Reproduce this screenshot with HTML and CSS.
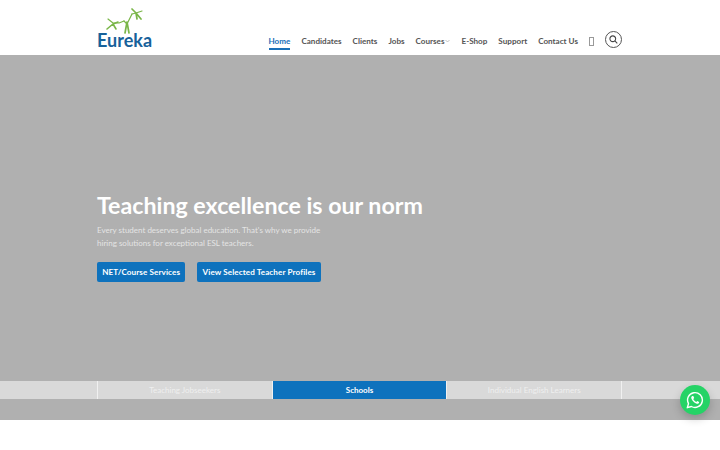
FILE: index.html
```html
<!DOCTYPE html>
<html lang="en">
<head>
    <meta charset="UTF-8">
    <meta name="viewport" content="width=device-width, initial-scale=1.0">
    <title>Eureka</title>
    <link rel="stylesheet" href="styles.css">
</head>
<body>
    <!-- Header -->
    <header class="header">
        <div class="container header-inner">
            <a class="logo" href="#">
                <svg class="logo-mark" width="38" height="26" viewBox="0 0 38 26" fill="none" stroke="#7ab648" stroke-linecap="round" stroke-linejoin="round">
                    <!-- left figure -->
                    <path d="M3 11 L8 15 L14 15 L19 13" stroke-width="1.2"/>
                    <path d="M2 21 L8 16 L13 14 M8 16 L11 21" stroke-width="1.6"/>
                    <!-- middle figure -->
                    <path d="M19 13 L22 16 L27 6" stroke-width="1.2"/>
                    <path d="M22 14 L20 25 M22 14 L24 25" stroke-width="1.7"/>
                    <!-- top figure -->
                    <path d="M27 6 L31 5 L37 3" stroke-width="1.2"/>
                    <path d="M27 1 L31 5 L36 11 M31 5 L32 11" stroke-width="1.7"/>
                </svg>
                <span class="logo-text">Eureka</span>
            </a>
            <nav class="nav">
                <a class="nav-link active" href="#">Home</a>
                <a class="nav-link" href="#">Candidates</a>
                <a class="nav-link" href="#">Clients</a>
                <a class="nav-link" href="#">Jobs</a>
                <a class="nav-link" href="#">Courses<svg class="caret" width="5" height="4" viewBox="0 0 5 4" fill="none" stroke="#aaa" stroke-width="0.7"><path d="M0.5 1 L2.5 3 L4.5 1"/></svg></a>
                <a class="nav-link" href="#">E-Shop</a>
                <a class="nav-link" href="#">Support</a>
                <a class="nav-link" href="#">Contact Us</a>
                <span class="tofu"></span>
                <button class="search-btn" aria-label="Search">
                    <svg width="9" height="9" viewBox="0 0 10 10" fill="none" stroke="#444" stroke-width="1.2"><circle cx="4.2" cy="4.2" r="3.2"/><path d="M6.6 6.6 L9.2 9.2"/></svg>
                </button>
            </nav>
        </div>
    </header>

    <!-- Hero -->
    <section class="hero">
        <div class="container hero-content">
            <h1>Teaching excellence is our norm</h1>
            <p>Every student deserves global education. That's why we provide<br>hiring solutions for exceptional ESL teachers.</p>
            <div class="hero-buttons">
                <a class="btn" href="#">NET/Course Services</a>
                <a class="btn" href="#">View Selected Teacher Profiles</a>
            </div>
        </div>
        <div class="tabs">
            <div class="container tabs-inner">
                <a class="tab" href="#">Teaching Jobseekers</a>
                <a class="tab selected" href="#">Schools</a>
                <a class="tab" href="#">Individual English Learners</a>
            </div>
        </div>
    </section>

    <a class="whatsapp" href="#" aria-label="WhatsApp">
        <svg width="18" height="18" viewBox="0 0 18 18" fill="none">
            <path d="M1.3 16.7 L2.5 12.6 A7.4 7.4 0 1 1 5.4 15.5 Z" stroke="#fff" stroke-width="1.4" stroke-linejoin="round"/>
            <path d="M6.3 4.9 C5.3 5.4 5 6.4 5.5 7.8 C6.2 9.8 8.2 11.8 10.2 12.5 C11.6 13 12.8 12.6 13.1 11.5 L13.1 10.9 L11.2 9.9 L10.3 10.9 C9.2 10.5 7.7 9 7.3 7.9 L8.2 7 L7.3 4.9 Z" fill="#fff"/>
        </svg>
    </a>
</body>
</html>
```

FILE: styles.css
```css
/* Global Styles */
html, body {
    height: 450px;
    overflow: hidden;
}

body {
    margin: 0;
    font-family: 'Lato', sans-serif;
    background-color: #fff;
    color: #444;
}

a {
    text-decoration: none;
}

.container {
    width: 525px;
    margin: 0 98px 0 97px;
}

/* Header */
.header {
    height: 55px;
    background-color: #fff;
}

.header-inner {
    display: flex;
    justify-content: space-between;
    height: 100%;
}

.logo {
    display: flex;
    flex-direction: column;
    align-items: flex-start;
    padding-top: 8px;
}

.logo-mark {
    margin-left: 8px;
    margin-bottom: -2px;
}

.logo-text {
    font-family: 'Lato', sans-serif;
    font-size: 18px;
    line-height: 16px;
    font-weight: 700;
    color: #17619a;
}

.nav {
    display: flex;
    align-items: center;
    align-self: flex-end;
    height: 30px;
}

.nav-link {
    display: flex;
    align-items: center;
    height: 13px;
    margin: 2px 0 0 11px;
    font-size: 8.1px;
    font-weight: 700;
    color: #555;
}

.nav-link:first-child {
    margin-left: 0;
}

.nav-link.active {
    color: #1a70b8;
    box-shadow: 0 2px 0 #1a70b8;
}

.caret {
    margin-left: 1px;
}

.tofu {
    width: 3px;
    height: 7px;
    margin: 2px 0 0 11px;
    border: 1px solid #999;
}

.search-btn {
    display: flex;
    align-items: center;
    justify-content: center;
    width: 17px;
    height: 17px;
    margin: 0 0 2px 11px;
    padding: 0;
    background: none;
    border: 1px solid #555;
    border-radius: 50%;
}

/* Hero */
.hero {
    display: flex;
    flex-direction: column;
    height: 365px;
    background-color: #b0b0b0;
}

.hero-content {
    flex: 1;
    padding-top: 134px;
    box-sizing: border-box;
}

.hero-content h1 {
    margin: 0 0 3px;
    font-size: 23.2px;
    line-height: 32px;
    font-weight: 700;
    color: #fff;
}

.hero-content p {
    margin: 0 0 13px;
    font-size: 8px;
    line-height: 12.5px;
    color: #e4e4e4;
}

.hero-buttons {
    display: flex;
    gap: 12px;
}

.btn {
    padding: 0 5.2px;
    height: 20px;
    line-height: 20px;
    background-color: #0e72bd;
    border-radius: 2px;
    font-size: 8.1px;
    letter-spacing: 0.1px;
    font-weight: 700;
    color: #fff;
}

/* Tabs */
.tabs {
    height: 18px;
    margin-bottom: 21px;
    background-color: #d9d9d9;
}

.tabs-inner {
    display: flex;
    height: 100%;
    border-left: 1px solid #f0f0f0;
    box-sizing: border-box;
}

.tab {
    flex: 1;
    line-height: 18px;
    text-align: center;
    font-size: 8px;
    color: #efefef;
    border-right: 1px solid #f0f0f0;
}

.tab.selected {
    background-color: #0e72bd;
    font-weight: 700;
    color: #fff;
}

/* WhatsApp bubble */
.whatsapp {
    position: fixed;
    left: 680px;
    top: 385px;
    display: flex;
    align-items: center;
    justify-content: center;
    width: 30px;
    height: 30px;
    background-color: #25d366;
    border-radius: 50%;
    box-shadow: 0 4px 10px rgba(0, 0, 0, 0.2);
}
```
